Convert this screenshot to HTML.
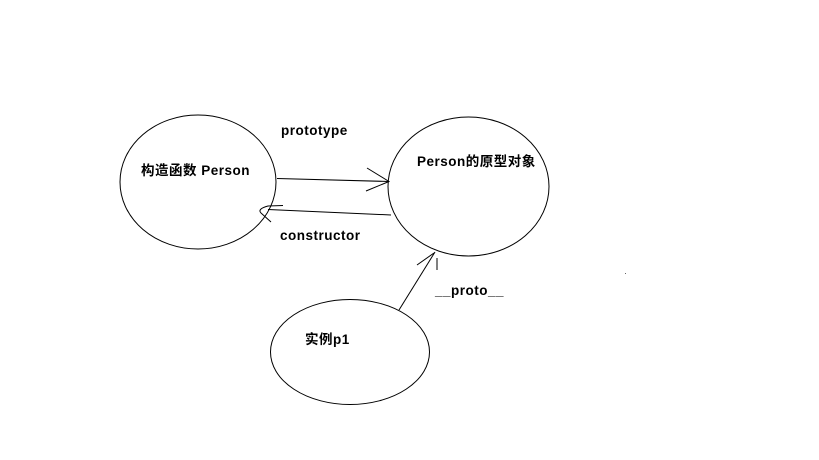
<!DOCTYPE html>
<html><head><meta charset="utf-8"><style>
body{margin:0;background:#fff;width:819px;height:460px;overflow:hidden}
svg{display:block}
text{font-family:"Liberation Sans","Noto Sans CJK SC",sans-serif;font-weight:bold;font-size:13.5px;letter-spacing:0.5px;fill:#000}
</style></head><body>
<svg width="819" height="460" viewBox="0 0 819 460">
<g fill="none" stroke="#000" stroke-width="1">
<ellipse cx="198" cy="182" rx="78" ry="67"/>
<ellipse cx="468.5" cy="186.5" rx="80.5" ry="69.5"/>
<ellipse cx="350" cy="352" rx="79.5" ry="52.5"/>
<path d="M277 178.5 L389 181.5"/>
<path d="M367 168 L389 181.5 L366 191"/>
<path d="M391 215 L268 209.5"/>
<path d="M283 205.5 L268 206 Q257 209 261 213 L271 222"/>
<path d="M399 310 L435 252"/>
<path d="M417 265 L434 253"/>
<path d="M437 258 L437 270"/>
</g>
<rect x="625" y="273" width="1" height="1" fill="#666"/>
<text x="281" y="135">prototype</text>
<text x="141" y="175">构造函数 Person</text>
<text x="417" y="166">Person的原型对象</text>
<text x="280" y="240">constructor</text>
<text x="435" y="295">__proto__</text>
<text x="305" y="344">实例p1</text>
</svg>
</body></html>
